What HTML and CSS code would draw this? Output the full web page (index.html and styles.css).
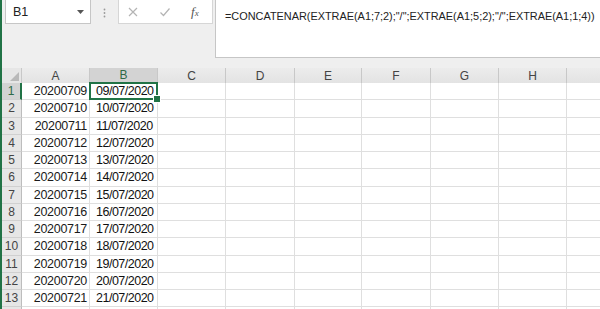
FILE: index.html
```html
<!DOCTYPE html>
<html lang="es">
<head>
  <meta charset="UTF-8">
  <title>CONCATENAR fechas</title>
  <link rel="stylesheet" href="styles.css">
</head>
<body>
  <div class="toolbar">
    <div class="namebox">
      <span>B1</span>
      <svg width="7" height="4" viewBox="0 0 7 4"><path d="M0 0h7L3.5 4z" fill="#555"/></svg>
    </div>
    <div class="grip">
      <svg width="3" height="10" viewBox="0 0 3 10"><circle cx="1.5" cy="1.5" r="0.9" fill="#999"/><circle cx="1.5" cy="5" r="0.9" fill="#999"/><circle cx="1.5" cy="8.5" r="0.9" fill="#999"/></svg>
    </div>
    <div class="actions">
      <svg width="12" height="12" viewBox="0 0 12 12"><path d="M2 2l8 8M10 2l-8 8" stroke="#b4b4b4" stroke-width="1.2" fill="none"/></svg>
      <svg width="12" height="12" viewBox="0 0 12 12"><path d="M1.5 6.5l3 3 6-7" stroke="#b4b4b4" stroke-width="1.2" fill="none"/></svg>
      <span class="fx">f<small>x</small></span>
    </div>
    <div class="formula">=CONCATENAR(EXTRAE(A1;7;2);"/";EXTRAE(A1;5;2);"/";EXTRAE(A1;1;4))</div>
  </div>

  <div class="sheet">
    <div class="row head">
      <div class="corner"><svg width="9" height="9" viewBox="0 0 9 9"><path d="M9 0v9H0z" fill="#b9b9b9"/></svg></div>
      <div class="ch">A</div><div class="ch on">B</div><div class="ch">C</div><div class="ch">D</div>
      <div class="ch">E</div><div class="ch">F</div><div class="ch">G</div><div class="ch">H</div><div class="ch"></div>
    </div>
    <div class="row">
      <div class="rh on">1</div><div class="c num">20200709</div><div class="c txt sel">09/07/2020</div>
      <div class="c"></div><div class="c"></div><div class="c"></div><div class="c"></div><div class="c"></div><div class="c"></div><div class="c"></div>
    </div>
    <div class="row">
      <div class="rh">2</div><div class="c num">20200710</div><div class="c txt">10/07/2020</div>
      <div class="c"></div><div class="c"></div><div class="c"></div><div class="c"></div><div class="c"></div><div class="c"></div><div class="c"></div>
    </div>
    <div class="row">
      <div class="rh">3</div><div class="c num">20200711</div><div class="c txt">11/07/2020</div>
      <div class="c"></div><div class="c"></div><div class="c"></div><div class="c"></div><div class="c"></div><div class="c"></div><div class="c"></div>
    </div>
    <div class="row">
      <div class="rh">4</div><div class="c num">20200712</div><div class="c txt">12/07/2020</div>
      <div class="c"></div><div class="c"></div><div class="c"></div><div class="c"></div><div class="c"></div><div class="c"></div><div class="c"></div>
    </div>
    <div class="row">
      <div class="rh">5</div><div class="c num">20200713</div><div class="c txt">13/07/2020</div>
      <div class="c"></div><div class="c"></div><div class="c"></div><div class="c"></div><div class="c"></div><div class="c"></div><div class="c"></div>
    </div>
    <div class="row">
      <div class="rh">6</div><div class="c num">20200714</div><div class="c txt">14/07/2020</div>
      <div class="c"></div><div class="c"></div><div class="c"></div><div class="c"></div><div class="c"></div><div class="c"></div><div class="c"></div>
    </div>
    <div class="row">
      <div class="rh">7</div><div class="c num">20200715</div><div class="c txt">15/07/2020</div>
      <div class="c"></div><div class="c"></div><div class="c"></div><div class="c"></div><div class="c"></div><div class="c"></div><div class="c"></div>
    </div>
    <div class="row">
      <div class="rh">8</div><div class="c num">20200716</div><div class="c txt">16/07/2020</div>
      <div class="c"></div><div class="c"></div><div class="c"></div><div class="c"></div><div class="c"></div><div class="c"></div><div class="c"></div>
    </div>
    <div class="row">
      <div class="rh">9</div><div class="c num">20200717</div><div class="c txt">17/07/2020</div>
      <div class="c"></div><div class="c"></div><div class="c"></div><div class="c"></div><div class="c"></div><div class="c"></div><div class="c"></div>
    </div>
    <div class="row">
      <div class="rh">10</div><div class="c num">20200718</div><div class="c txt">18/07/2020</div>
      <div class="c"></div><div class="c"></div><div class="c"></div><div class="c"></div><div class="c"></div><div class="c"></div><div class="c"></div>
    </div>
    <div class="row">
      <div class="rh">11</div><div class="c num">20200719</div><div class="c txt">19/07/2020</div>
      <div class="c"></div><div class="c"></div><div class="c"></div><div class="c"></div><div class="c"></div><div class="c"></div><div class="c"></div>
    </div>
    <div class="row">
      <div class="rh">12</div><div class="c num">20200720</div><div class="c txt">20/07/2020</div>
      <div class="c"></div><div class="c"></div><div class="c"></div><div class="c"></div><div class="c"></div><div class="c"></div><div class="c"></div>
    </div>
    <div class="row">
      <div class="rh">13</div><div class="c num">20200721</div><div class="c txt">21/07/2020</div>
      <div class="c"></div><div class="c"></div><div class="c"></div><div class="c"></div><div class="c"></div><div class="c"></div><div class="c"></div>
    </div>
    <div class="row">
      <div class="rh"></div><div class="c"></div><div class="c"></div>
      <div class="c"></div><div class="c"></div><div class="c"></div><div class="c"></div><div class="c"></div><div class="c"></div><div class="c"></div>
    </div>
  </div>
</body>
</html>
```

FILE: styles.css
```css
* {
  box-sizing: border-box;
}

body {
  margin: 0;
  width: 600px;
  height: 309px;
  overflow: hidden;
  background: #efefef;
  border-left: 2px solid #217346;
  font-family: "Liberation Sans", Arial, sans-serif;
  color: #222;
}

/* formula bar */
.toolbar {
  height: 68px;
  display: flex;
  align-items: flex-start;
}

.namebox {
  margin-left: 3px;
  width: 86px;
  height: 24px;
  background: #fff;
  border: 1px solid #c6c6c6;
  border-top: none;
  display: flex;
  align-items: center;
  justify-content: space-between;
  padding: 0 6px 0 7px;
  font-size: 12.5px;
}

.grip {
  width: 27px;
  display: flex;
  justify-content: center;
  padding-top: 8px;
}

.actions {
  width: 95px;
  height: 24px;
  background: #fff;
  border: 1px solid #d6d6d6;
  border-top: none;
  display: flex;
  align-items: center;
  gap: 20px;
  padding-left: 8px;
}

.fx {
  font-family: "Liberation Serif", serif;
  font-style: italic;
  font-size: 13px;
  color: #555;
}

.fx small {
  font-size: 9px;
}

.formula {
  flex: 1;
  height: 58px;
  margin-left: 2px;
  background: #fff;
  border: 1px solid #c6c6c6;
  border-top: none;
  border-right: none;
  padding: 10px 0 0 9px;
  font-size: 10.9px;
  white-space: nowrap;
  overflow: hidden;
}

/* grid */
.sheet {
  overflow: hidden;
}

.row {
  display: grid;
  grid-template-columns: 20px 68px 68px 68px 69px 67px 69px 68px 68px 68px;
  height: 17.25px;
}

.row.head {
  height: 15px;
}

.corner {
  background: #e6e6e6;
  border-right: 1px solid #c8c8c8;
  border-bottom: 1px solid #ababab;
  display: flex;
  align-items: flex-end;
  justify-content: flex-end;
  padding: 0 2px 2px 0;
}

.ch {
  background: linear-gradient(#ececec, #e3e3e3);
  border-right: 1px solid #c8c8c8;
  border-bottom: 1px solid #ababab;
  display: flex;
  align-items: center;
  justify-content: center;
  font-size: 12px;
  color: #444;
}

.ch.on {
  background: #d3d3d3;
  border-bottom: 2px solid #217346;
  color: #2f6a48;
}

.rh {
  background: #e6e6e6;
  border-right: 1px solid #bdbdbd;
  border-bottom: 1px solid #d0d0d0;
  display: flex;
  align-items: center;
  justify-content: center;
  font-size: 12px;
  color: #444;
}

.rh.on {
  background: #d3d3d3;
  border-right: 2px solid #217346;
  color: #2f6a48;
}

.c {
  background: #fff;
  border-right: 1px solid #dfdfdf;
  border-bottom: 1px solid #dfdfdf;
  display: flex;
  align-items: center;
  font-size: 12.5px;
  letter-spacing: -0.3px;
  color: #1a1a1a;
  white-space: nowrap;
}

.num {
  justify-content: flex-end;
  padding-right: 2px;
}

.txt {
  padding-left: 6px;
  letter-spacing: -0.5px;
  color: #111;
}

.sel {
  position: relative;
}

.sel::before {
  content: "";
  position: absolute;
  left: -1px;
  top: -1px;
  right: -1px;
  bottom: -1px;
  border: 2px solid #217346;
}

.sel::after {
  content: "";
  position: absolute;
  right: -4px;
  bottom: -4px;
  width: 6px;
  height: 6px;
  background: #217346;
  border: 1px solid #fff;
}
```
